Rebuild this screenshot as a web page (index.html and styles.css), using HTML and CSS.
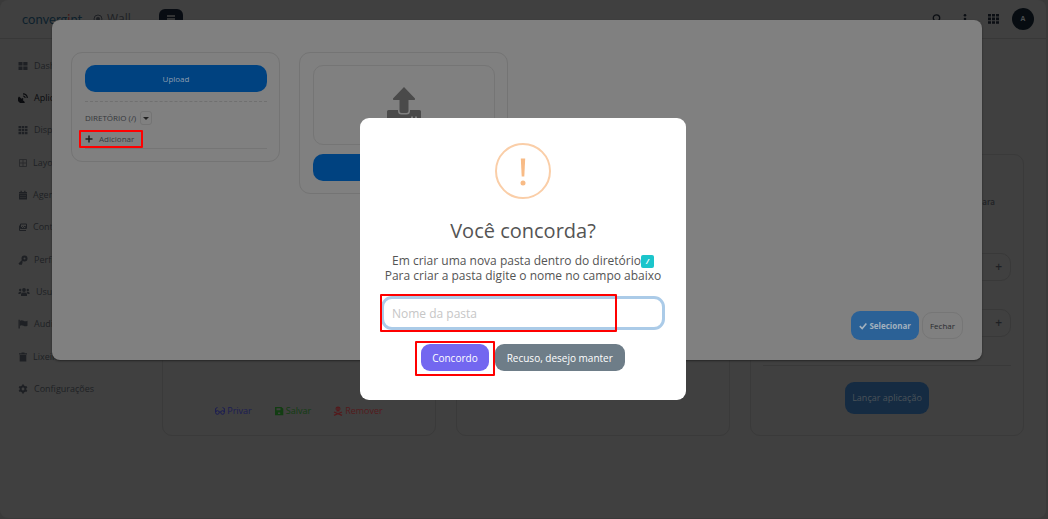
FILE: index.html
```html
<!DOCTYPE html>
<html lang="pt-BR">
<head>
<meta charset="utf-8">
<title>Convergint Wall</title>
<link rel="stylesheet" href="styles.css">
</head>
<body>
<div class="app">
  <header class="topbar">
    <span class="logo">converg<span class="logo-i">i</span>nt</span>
    <span class="product">
      <svg class="icon" viewBox="0 0 10 10"><circle cx="5" cy="5" r="4" fill="none" stroke="currentColor"/><circle cx="5" cy="5" r="2" fill="currentColor"/></svg>
      Wall
    </span>
    <button class="menu-btn" aria-label="Menu"><svg class="icon" viewBox="0 0 10 10"><path d="M1 2h8M1 5h8M1 8h8" stroke="currentColor" stroke-width="1.5"/></svg></button>
    <nav class="tools">
      <button class="tool" aria-label="Pesquisar"><svg class="icon" viewBox="0 0 10 10"><circle cx="4.5" cy="4" r="3.2" fill="none" stroke="currentColor" stroke-width="1.3"/><path d="M7 6.5l2.500 3" stroke="currentColor" stroke-width="1.300"/></svg></button>
      <button class="tool" aria-label="Mais"><svg class="icon" viewBox="0 0 10 10" fill="currentColor"><circle cx="5" cy="1.300" r="1.300"/><circle cx="5" cy="5" r="1.300"/><circle cx="5" cy="8.700" r="1.300"/></svg></button>
      <button class="tool" aria-label="Aplicativos"><svg class="icon" viewBox="0 0 11 10" fill="currentColor"><path d="M0 0h3v2.600H0zM4 0h3v2.600H4zM8 0h3v2.600H8zM0 3.600h3v2.600H0zM4 3.600h3v2.600H4zM8 3.600h3v2.600H8zM0 7.200h3v2.600H0zM4 7.200h3v2.600H4zM8 7.200h3v2.600H8z"/></svg></button>
      <button class="avatar">A</button>
    </nav>
  </header>

  <div class="body">
    <nav class="sidebar">
      <a href="#"><svg class="icon" viewBox="0 0 10 10" fill="currentColor"><path d="M.5 1h4v3.600h-4zM5.300 1h4.200v3.600H5.300zM.5 5.400h4V9h-4zM5.300 5.400h4.200V9H5.300z"/></svg>Dashboard</a>
      <a href="#" class="active"><svg class="icon" viewBox="0 0 10 10"><path d="M1 3.500A4 4 0 0 0 7 9.200L4.700 7 5.500 6 4.600 5 3.500 5.800z" fill="currentColor"/><path d="M5 .8A4.300 4.300 0 0 1 9.300 5M5 3A2.200 2.200 0 0 1 7.200 5" fill="none" stroke="currentColor" stroke-width="1.200"/></svg>Aplicações</a>
      <a href="#"><svg class="icon" viewBox="0 0 10 10" fill="currentColor"><path d="M.5 1h2.600v2.300H.5zM3.800 1h2.500v2.300H3.800zM7 1h2.500v2.300H7zM.5 4h2.600v2.200H.5zM3.800 4h2.500v2.200H3.800zM7 4h2.500v2.200H7zM.5 7h2.600v2.200H.5zM3.800 7h2.500v2.200H3.800zM7 7h2.500v2.200H7z"/></svg>Dispositivos</a>
      <a href="#" class="narrow"><svg class="icon" viewBox="0 0 10 10"><path d="M1.500 1.500h7v7h-7zM5 1.500v7M1.500 5h7" fill="none" stroke="#2a2b2d"/></svg>Layouts</a>
      <a href="#" class="narrow"><svg class="icon" viewBox="0 0 10 10"><path d="M1 2h1.500V.7h1.300V2h2.400V.7h1.300V2H9v7.500H1z" fill="currentColor"/><path d="M1 3.500h8M2 5.500h6M2 7.500h6" stroke="#404040" stroke-width=".4"/></svg>Agendamentos</a>
      <a href="#" class="narrow"><svg class="icon" viewBox="0 0 10 10" fill="none" stroke="currentColor"><path d="M2.500 2h6v4.500h-6z"/><path d="M1.500 3.500v5h6.500M3 6l1.500-1.500 1 1L7 4l1 2"/></svg>Conteúdos</a>
      <a href="#"><svg class="icon" viewBox="0 0 10 10"><circle cx="6.500" cy="3.500" r="2" fill="none" stroke="currentColor" stroke-width="2"/><path d="M5 5L1 9M1 9h2.200V7.700h1.300" fill="none" stroke="currentColor" stroke-width="1.500"/></svg>Perfis</a>
      <a href="#" class="wide"><svg class="icon" viewBox="0 0 12 10" fill="currentColor"><circle cx="6" cy="3" r="1.900"/><circle cx="2.200" cy="3" r="1.200"/><circle cx="9.800" cy="3" r="1.200"/><path d="M3 9V7.500Q3 5.500 5 5.500h2q2 0 2 2V9zM.3 7Q.3 4.800 2.200 4.800L3.500 5Q2.500 6 2.500 7zM11.700 7q0-2.200-1.900-2.200L8.500 5q1 1 1 2z"/></svg>Usuários</a>
      <a href="#"><svg class="icon" viewBox="0 0 10 10" fill="currentColor"><path d="M.5.7h1.300V9.500H.5zM2 1.800q1.700-1 3.500 0t4 0v5q-2 1-4 0t-3.500 0z"/></svg>Auditoria</a>
      <a href="#" class="narrow"><svg class="icon" viewBox="0 0 10 10" fill="currentColor"><path d="M1 1.200h2.500V.5h3v.7H9v1.200H1zM1.700 3h6.600v6.500H1.700z"/></svg>Lixeira</a>
      <a href="#"><svg class="icon" viewBox="0 0 10 10"><circle cx="5" cy="5" r="2.400" fill="none" stroke="currentColor" stroke-width="2"/><path d="M5 .5v2M5 7.500v2M1.100 2.800l1.700 1M7.200 6.200l1.700 1M1.100 7.200l1.700-1M7.200 3.800l1.700-1" stroke="currentColor" stroke-width="1.800"/></svg>Configurações</a>
    </nav>

    <main class="cards">
      <section class="card">
        <div class="actions">
          <a href="#" class="blue"><svg class="icon" viewBox="0 0 10 10" fill="none" stroke="currentColor"><circle cx="2.400" cy="6.500" r="1.800"/><circle cx="7.600" cy="6.500" r="1.800"/><path d="M.6 6V2.500L2.500 1.500M9.400 6V2.500L7.500 1.500M4.200 6h1.600"/></svg>Privar</a>
          <a href="#" class="green"><svg class="icon" viewBox="0 0 10 10"><path d="M1 1h6.500L9.300 2.800V9.300H1z" fill="currentColor"/><path d="M2.500 2.200h4v2h-4zM4 6.500h2.200v1.500H4z" fill="#404040"/></svg>Salvar</a>
          <a href="#" class="red"><svg class="icon" viewBox="0 0 10 10"><path d="M2.500 2.700a2.500 2.200 0 0 1 5 0Q7.500 4 6.500 4.300V5.500h-3V4.300Q2.500 4 2.500 2.700z" fill="currentColor"/><path d="M1 6l8 3.300M9 6L1 9.300" stroke="currentColor" stroke-width="1.300"/><path d="M3.500 2.500h1v1h-1zM5.500 2.500h1v1h-1z" fill="#404040"/></svg>Remover</a>
        </div>
      </section>
      <section class="card"></section>
      <section class="card launch">
        <p class="hint">para</p>
        <button class="expand" aria-label="Expandir">+</button>
        <button class="expand" aria-label="Expandir">+</button>
        <hr>
        <button class="launch-btn">Lançar aplicação</button>
      </section>
    </main>
  </div>

  <div class="overlay">
    <section class="modal">
      <div class="panels">
        <div class="panel">
          <button class="primary">Upload</button>
          <hr class="dashed">
          <div class="directory"><span>DIRETÓRIO (/)</span><button class="caret" aria-label="Abrir diretório"></button></div>
          <button class="add marked"><svg class="icon" viewBox="0 0 8 8"><path d="M4 .5v7M.5 4h7" stroke="currentColor" stroke-width="1.500"/></svg>Adicionar</button>
          <hr>
        </div>
        <div class="panel">
          <div class="dropzone">
            <svg class="upload-icon" viewBox="0 0 34 34" fill="currentColor"><path d="M17 0L28 11.500Q28.500 13 27 13H21.500V24Q21.500 26 19.500 26h-5Q12.500 26 12.500 24V13H7Q5.500 13 6 11.500z"/><path d="M1.500 23H11v1q0 3.500 3.500 3.500h5Q23 27.500 23 24v-1h9.500Q34 23 34 24.500V34H0V24.500Q0 23 1.500 23z"/><path d="M24 30.500h2M28 30.500h2" stroke="#808080" stroke-width="2"/></svg>
          </div>
          <button class="primary" aria-label="Enviar"></button>
        </div>
      </div>
      <footer class="modal-actions">
        <button class="select"><svg class="icon" viewBox="0 0 10 10"><path d="M1 5.200l3 3L9.200 2" fill="none" stroke="currentColor" stroke-width="2"/></svg>Selecionar</button>
        <button class="close">Fechar</button>
      </footer>
    </section>
  </div>

  <div class="overlay centered">
    <section class="dialog" role="dialog" aria-labelledby="dialog-title">
      <svg class="warning" viewBox="0 0 56 56"><circle cx="28" cy="28" r="27" fill="none" stroke="#facea8" stroke-width="2"/><path d="M25.800 15.500h4.400l-.9 18h-2.600z" fill="#f8bb86"/><circle cx="28" cy="40" r="2.500" fill="#f8bb86"/></svg>
      <h1 id="dialog-title">Você concorda?</h1>
      <label for="folder">Em criar uma nova pasta dentro do diretório<span class="badge">/</span><br>Para criar a pasta digite o nome no campo abaixo</label>
      <div class="field"><input id="folder" type="text" placeholder="Nome da pasta"></div>
      <div class="choices">
        <span class="marked"><button class="confirm">Concordo</button></span>
        <button class="deny">Recuso, desejo manter</button>
      </div>
    </section>
  </div>
</div>
</body>
</html>
```
FILE: styles.css
```css
* { box-sizing: border-box; }

body {
  margin: 0;
  background: #3a3a3a;
  font: 9px/12px "Open Sans", sans-serif;
  color: #1e2024;
}

button, input { font: inherit; color: inherit; }
button { border: 0; padding: 0; background: none; }
a { color: inherit; text-decoration: none; }
hr { width: 100%; margin: 0; border: 0; border-top: 1px solid #757575; }
.icon { width: 10px; height: 10px; flex: none; }

.app {
  position: relative;
  min-height: calc(100vh - 1px);
  margin-right: 2px;
  background: #404040;
  border-radius: 8px;
}

.topbar {
  display: flex;
  align-items: center;
  height: 39px;
  padding: 0 12px 0 22px;
  border-bottom: 1px solid #383838;
}
.logo { font: 13px/16px Lato, sans-serif; color: #0e212c; width: 71px; }
.logo-i { color: #451716; }
.product { display: flex; align-items: center; gap: 4px; width: 66px; font-size: 12px; line-height: 16px; }
.menu-btn {
  display: grid;
  place-items: center;
  width: 24px;
  height: 20px;
  border-radius: 6px;
  background: #080c12;
  color: #404040;
}
.tools { display: flex; align-items: center; gap: 18px; margin-left: auto; color: #0b0e13; }
.tool { display: flex; }
.tool:nth-child(3) .icon { width: 11px; }
.avatar {
  width: 22px;
  height: 22px;
  margin-left: -5px;
  border-radius: 50%;
  background: #070c11;
  color: #4c4f52;
  font-size: 7px;
  font-weight: 700;
}

.body { display: flex; }
.sidebar { display: flex; flex-direction: column; gap: 20px; width: 162px; padding: 21px 0 0 18px; }
.sidebar a { display: flex; align-items: center; gap: 6px; height: 12px; font-weight: 500; }
.sidebar a:nth-child(3n+4) { margin-top: 1px; }
.sidebar .narrow { gap: 5px; }
.sidebar .wide .icon { width: 12px; }
.sidebar .active { color: #0a0b0e; }

.cards {
  flex: 1;
  display: grid;
  grid-template-columns: repeat(3, 1fr);
  gap: 20px;
  padding: 115px 22px 0 0;
}
.card {
  display: flex;
  flex-direction: column;
  justify-content: flex-end;
  min-height: 282px;
  padding: 18px;
  border: 1px solid #3a3a3a;
  border-radius: 10px;
}
.card hr { border-color: #393939; }
.actions { display: flex; justify-content: center; gap: 22px; }
.actions a { display: flex; align-items: center; gap: 2px; }
.blue { color: #1b1c53; }
.green { color: #123d12; }
.red { color: #541a1c; }
.launch { align-items: center; padding: 0 12px 21px; }
.hint { margin: 0 16px 45px; align-self: flex-end; font-size: 8px; font-weight: 600; }
.expand {
  width: 100%;
  height: 28px;
  padding-right: 8px;
  margin-bottom: 28px;
  border: 1px solid #393939;
  border-radius: 10px;
  font-size: 12px;
  font-weight: 600;
  text-align: right;
}
.launch-btn {
  margin-top: 16px;
  height: 32px;
  padding: 0 7px;
  border-radius: 9px;
  background: #152b42;
  color: #4b5359;
}

.overlay { position: absolute; inset: 0; padding: 20px 64px 0 52px; }
.centered { display: flex; align-items: center; justify-content: center; padding: 0; }

.modal {
  display: flex;
  flex-direction: column;
  justify-content: space-between;
  min-height: 340px;
  padding: 32px 19px 20px;
  border-radius: 8px;
  background: #808080;
  box-shadow: 0 1px 2px #252525;
  font-size: 8px;
}
.panels { display: flex; align-items: flex-start; gap: 19px; }
.panel {
  display: flex;
  flex-direction: column;
  align-items: flex-start;
  width: 209px;
  padding: 12px 12px 12px 13px;
  border: 1px solid #747474;
  border-radius: 11px;
}
.primary { width: 100%; height: 27px; border-radius: 10px; background: #004280; color: #8c9daf; font-weight: 500; }
.dashed { margin: 9px 0; border-top: 1px dashed #707070; }
.directory { display: flex; align-items: center; gap: 4px; height: 14px; font-weight: 500; color: #34373b; }
.caret { display: grid; place-items: center; width: 12px; height: 14px; border: 1px solid #747474; border-radius: 3px; }
.caret::after { content: ""; border: 3px solid transparent; border-top-color: #222; border-bottom: 0; }
.marked { position: relative; }
.marked::after { content: ""; position: absolute; border: 2px solid #f00; border-radius: 1px; }
.add { display: flex; align-items: center; gap: 6px; height: 12px; margin: 8px 0 3px; color: #3a3d42; }
.add .icon { width: 8px; height: 8px; color: #222; }
.add::after { inset: -3px -9px -3px -6px; }
.dropzone {
  display: flex;
  justify-content: center;
  width: 100%;
  height: 80px;
  margin-bottom: 9px;
  padding-top: 21px;
  border: 1px solid #757575;
  border-radius: 10px;
}
.upload-icon { width: 34px; height: 34px; color: #4a4a4a; }
.modal-actions { display: flex; justify-content: flex-end; align-items: center; gap: 3px; }
.select {
  display: flex;
  align-items: center;
  gap: 2px;
  height: 29px;
  padding: 0 8px;
  border-radius: 9px;
  background: #2b6196;
  color: #a3b1be;
  font-weight: 700;
}
.select .icon { width: 8px; height: 8px; }
.close { height: 27px; padding: 0 7px; border: 1px solid #767676; border-radius: 10px; color: #292b2f; }

.dialog {
  display: flex;
  flex-direction: column;
  align-items: center;
  width: 326px;
  padding: 25px 21px 29px;
  border-radius: 9px;
  background: #fff;
  color: #545454;
}
.warning { width: 56px; height: 56px; }
.dialog h1 { margin: 18px 0 8px; font-size: 20px; line-height: 28px; font-weight: 500; }
.dialog label { font-size: 12px; line-height: 15px; text-align: center; white-space: nowrap; }
.badge {
  display: inline-block;
  width: 13px;
  height: 13px;
  margin: -4px 0;
  border-radius: 2px;
  background: #1bc5cb;
  color: #fff;
  font: italic 700 7px/13px "Open Sans", sans-serif;
  vertical-align: 1px;
}
.field { position: relative; width: 100%; margin: 13px 0 14px; }
.field::after {
  content: "";
  position: absolute;
  inset: -2px 48px -2px -1px;
  border: 2px solid #f00;
  border-radius: 1px;
  pointer-events: none;
}
.field input {
  display: block;
  width: 100%;
  height: 34px;
  padding: 0 8px;
  border: 3px solid #abcbe8;
  border-radius: 11px;
  outline: 0;
  font-size: 12px;
}
.field input::placeholder { color: #c6c6c6; opacity: 1; }
.choices { display: flex; gap: 6px; font-size: 10px; font-weight: 500; color: #fff; }
.choices button { height: 27px; padding: 0 11px; border-radius: 9px; white-space: nowrap; }
.choices .deny { padding: 0 12px; }
.choices .marked::after { inset: -3px -6px -5px -6px; pointer-events: none; }
.confirm { background: #7367f0; }
.deny { background: #6e7d88; }
```
